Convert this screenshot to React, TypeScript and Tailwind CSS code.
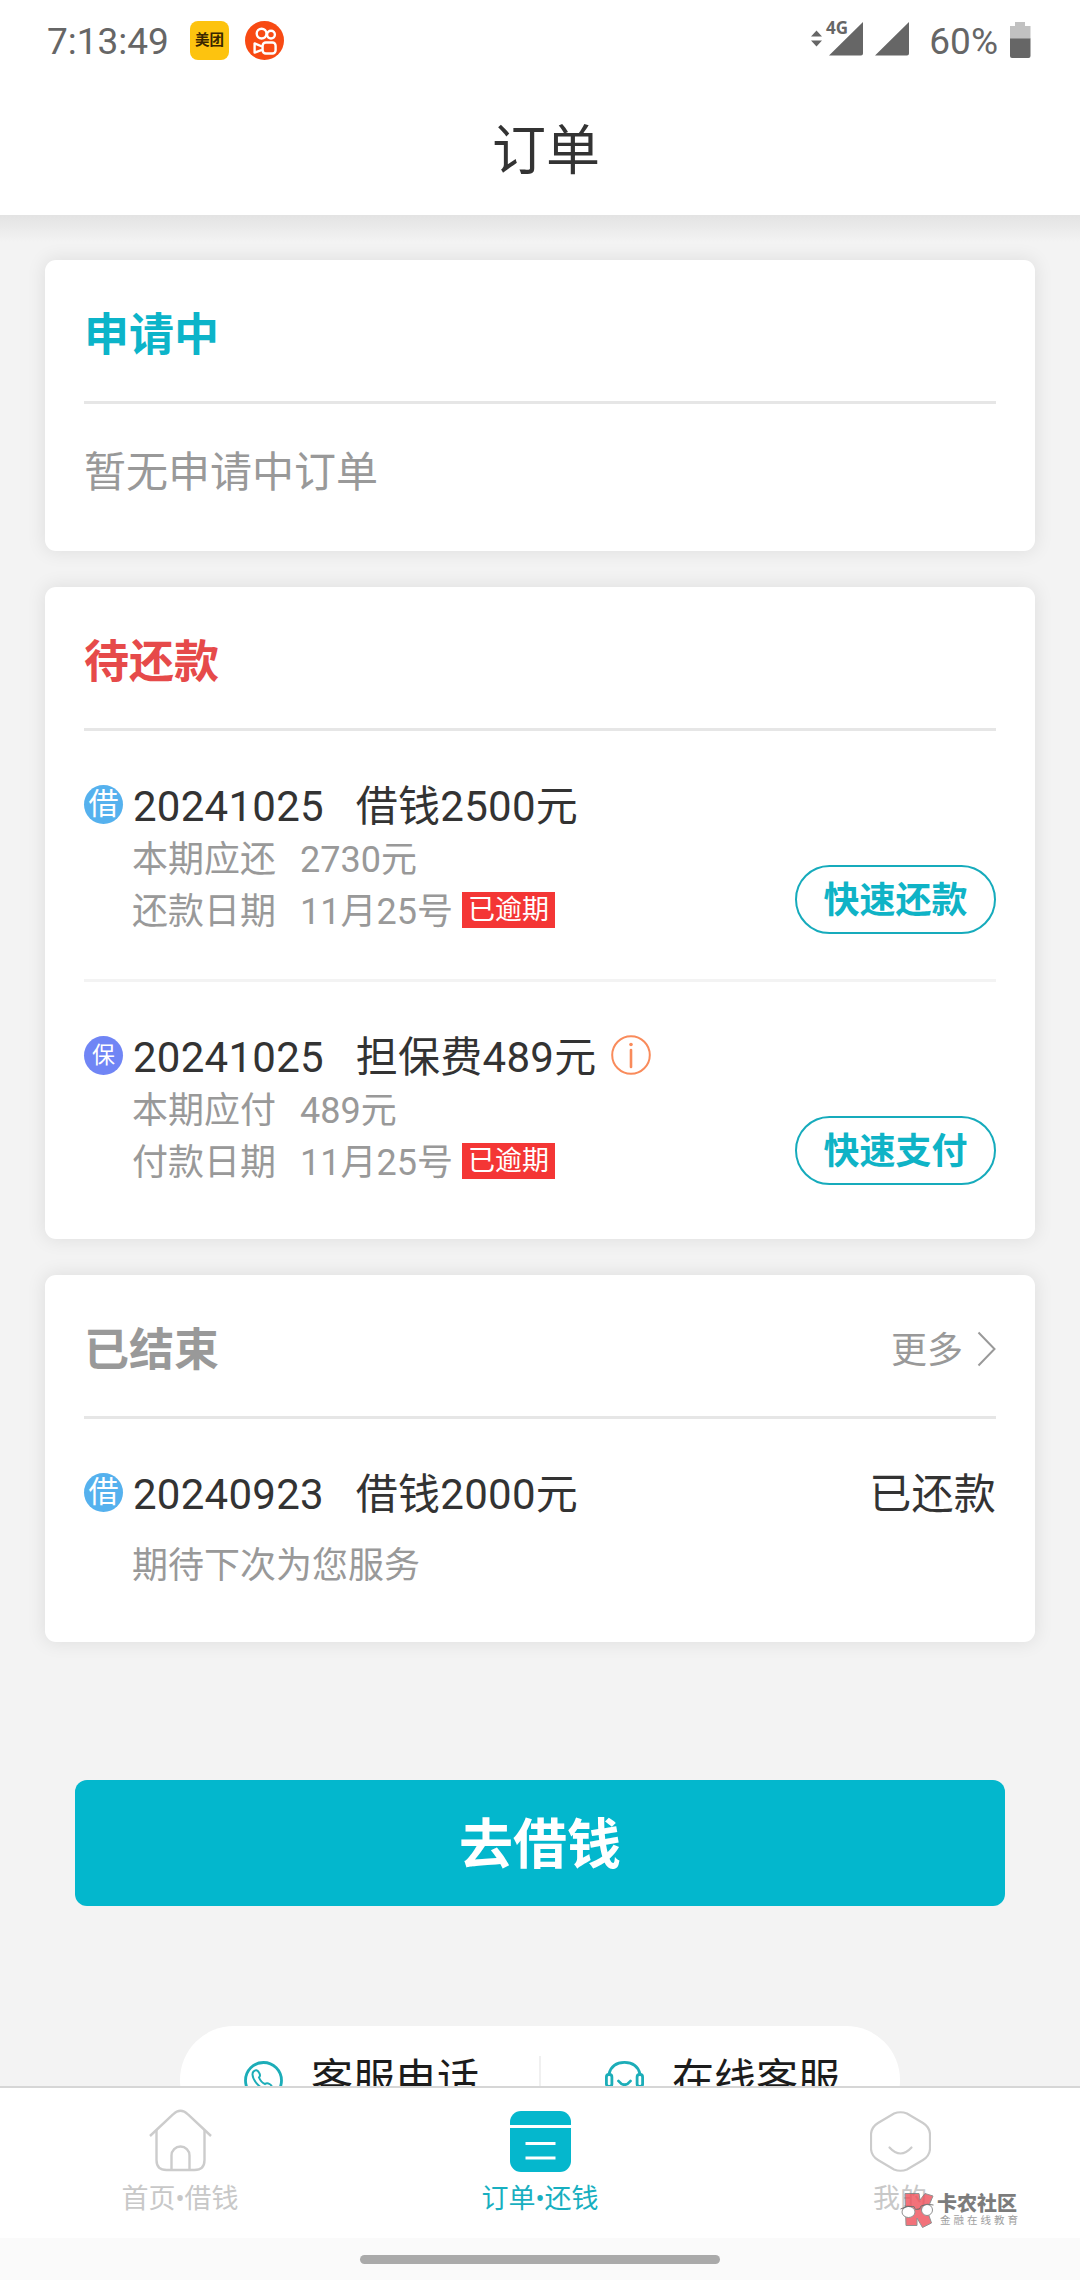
import React from "react";

const StatusBar = () => {
    return (
        <div className="flex h-[80px] items-center justify-between pl-[47px] pr-[49px] text-[37px] leading-[42px] text-[#666666]">
            <div className="flex items-center">
                <span className="w-[143px] pt-[3px]">7:13:49</span>
                {/* Meituan */}
                <div className="flex size-[39px] items-center justify-center rounded-[8px] bg-[#fdc30f] pt-[2px] text-[14.5px] leading-none font-bold text-[#3a2600]">
                    美团
                </div>
                {/* Kuaishou */}
                <svg className="ml-4" width="39" height="39" viewBox="0 0 39 39" fill="none" stroke="#fff" strokeWidth="2.4">
                    <circle cx="19.5" cy="19.5" r="19.5" fill="#f84a13" stroke="none" />
                    <circle cx="16.6" cy="12.6" r="4.9" />
                    <circle cx="26" cy="13.6" r="3.9" />
                    <rect x="17.600" y="21.500" width="13" height="11" rx="3.2" />
                    <path d="M17 25.500 9.600 22.400v9.200l7.400-2.800" strokeLinejoin="round" />
                </svg>
            </div>
            <div className="flex items-center">
                <svg width="100" height="50" viewBox="0 -6 100 50" fill="#666666">
                    <path d="M0 15.5 5.500 9.5 11 15.5ZM0 19.500h11L5.500 25.500Z" />
                    <text x="15" y="13" fontSize="17" fontWeight="700" fontFamily="Open Sans, sans-serif">
                        4G
                    </text>
                    <path d="M18 34.5 52 1v31.500q0 2-2 2ZM64 34.500 98 1v31.500q0 2-2 2Z" />
                </svg>
                <span className="ml-[18px] pt-[3px]">60%</span>
                <svg className="ml-[12px]" width="21" height="36" viewBox="0 0 21 36">
                    <path d="M5 0h10v4h5.500v13H0V4h5Z" fill="#c1c1c1" />
                    <path d="M0 16.500h20.500V34q0 2-2 2H2q-2 0-2-2Z" fill="#666666" />
                </svg>
            </div>
        </div>
    );
};

const Card = ({ children, className }: { children: React.ReactNode; className: string }) => (
    <section className={`rounded-[11px] bg-white px-[39px] shadow-[0_0_18px_2px_rgba(0,0,0,0.08)] ${className}`}>
        {children}
    </section>
);

const CardHeader = ({ title, color, more }: { title: string; color: string; more?: boolean }) => (
    <div className="flex h-[144px] items-center justify-between border-b-3 border-[#e6e6e6] pt-[11px]">
        <h2 className={`text-[45px] leading-[60px] font-bold ${color}`}>{title}</h2>
        {more && (
            <div className="flex items-center text-[36px] leading-[52px] text-[#999999]">
                更多
                <svg className="mb-[5px] ml-[14px]" width="19" height="36" viewBox="0 0 19 36" fill="none" stroke="#999999" strokeWidth="2">
                    <path d="M1.500 1.500 17.500 18 1.500 34.500" />
                </svg>
            </div>
        )}
    </div>
);

const Tag = ({ kind }: { kind: "loan" | "fee" }) =>
    kind === "loan" ? (
        <span className="flex size-[39px] items-center justify-center rounded-full bg-[#55b1ee] text-[30px] leading-none text-white">
            借
        </span>
    ) : (
        <span className="flex size-[39px] items-center justify-center rounded-full bg-[#7085f5] text-[23px] leading-none text-white">
            保
        </span>
    );

const InfoIcon = () => (
    <svg className="ml-[15px]" width="40" height="40" viewBox="0 0 40 40" fill="none" stroke="#f98b5b" strokeWidth="2">
        <circle cx="20" cy="20" r="18.800" />
        <path d="M20 15v17" strokeWidth="2.600" strokeLinecap="round" />
        <circle cx="20" cy="9.500" r="1.800" fill="#f98b5b" stroke="none" />
    </svg>
);

type Bill = {
    kind: "loan" | "fee";
    no: string;
    name: string;
    dueLabel: string;
    due: string;
    dateLabel: string;
    date: string;
    action: string;
};

const bills: Bill[] = [
    {
        kind: "loan",
        no: "20241025",
        name: "借钱2500元",
        dueLabel: "本期应还",
        due: "2730元",
        dateLabel: "还款日期",
        date: "11月25号",
        action: "快速还款",
    },
    {
        kind: "fee",
        no: "20241025",
        name: "担保费489元",
        dueLabel: "本期应付",
        due: "489元",
        dateLabel: "付款日期",
        date: "11月25号",
        action: "快速支付",
    },
];

const BillRow = ({ bill }: { bill: Bill }) => (
    <div className="flex h-[251px] items-start justify-between border-b-3 border-[#f3f3f3] pt-[43px] last:border-b-0">
        <div>
            <div className="flex h-[60px] items-center text-[42px] tracking-[0.25px] text-[#333333]">
                <Tag kind={bill.kind} />
                <span className="ml-[10px] pt-1">{bill.no}</span>
                <span className="ml-[32px] pt-1">{bill.name}</span>
                {bill.kind === "fee" && <InfoIcon />}
            </div>
            <div className="pl-[48px] text-[36px] leading-[52px] text-[#999999]">
                <div className="flex">
                    <span>{bill.dueLabel}</span>
                    <span className="ml-[24px]">{bill.due}</span>
                </div>
                <div className="flex items-center">
                    <span>{bill.dateLabel}</span>
                    <span className="ml-[24px]">{bill.date}</span>
                    <span className="mb-[4px] ml-[9px] flex h-[36px] w-[93px] items-center justify-center bg-[#f43635] text-[27px] text-white">
                        已逾期
                    </span>
                </div>
            </div>
        </div>
        <button className="mt-[91px] h-[69px] w-[201px] rounded-full border-2 border-[#16abbc] pt-[3px] text-[36px] leading-[52px] font-bold text-[#0fb3c6]">
            {bill.action}
        </button>
    </div>
);

const Service = ({ icon, label }: { icon: React.ReactNode; label: string }) => (
    <div className="flex flex-1 items-center pl-[64px]">
        {icon}
        <span className="ml-[28px] text-[42px] leading-[60px] text-[#1c1c1c]">{label}</span>
    </div>
);

const PhoneIcon = () => (
    <svg width="39" height="39" viewBox="0 0 39 39" fill="none" stroke="#1cadb8" strokeWidth="2.800">
        <circle cx="19.500" cy="19.500" r="18" />
        <path d="M9.500 10.500q3-3 5.500 1 2 3 0 5 2 5 6 6.500 2-1.500 4.500 0 4 2.500 1.500 5.500-4 3-10-2-8-6.500-8.500-13 0-2 1-3Z" strokeWidth="2" />
    </svg>
);

const HeadsetIcon = () => (
    <svg width="39" height="39" viewBox="0 0 39 39" fill="none" stroke="#1cadb8" strokeWidth="2.800">
        <path d="M4 13C6 5 12 1.400 19.500 1.400S33 5 35 13" />
        <rect x="1.400" y="13.500" width="5.500" height="12" rx="2.500" />
        <rect x="32.100" y="13.500" width="5.500" height="12" rx="2.500" />
        <path d="M13.500 20q6 7.500 12 0" strokeLinecap="round" />
        <path d="M35 26q-1 9-12 11" />
    </svg>
);

const HomeIcon = () => (
    <svg className="-mt-[2px]" width="63" height="63" viewBox="0 0 63 63" fill="none" stroke="#cccccc" strokeWidth="2.400">
        <path d="M1 27 24 5.500Q31.500-2 39 5.500L62 27" />
        <path d="M7.500 21v30q0 10 10 10h28q10 0 10-10V21" />
        <path d="M22.500 61V46.500a9 9 0 0 1 18 0V61" />
    </svg>
);

const OrderIcon = () => (
    <svg width="61" height="61" viewBox="0 0 61 61">
        <rect width="61" height="61" rx="11" fill="#05b7cd" />
        <path d="M0 15.500h61M15.500 32.500h30M15.500 47h30" stroke="#fff" strokeWidth="2.800" />
    </svg>
);

const MineIcon = () => (
    <svg width="61" height="61" viewBox="0 0 61 61" fill="none" stroke="#cccccc" strokeWidth="2.200">
        <path d="M24 2.500q6.500-2.500 13 0L53 12q6.500 4 7 11v15q-.5 7-7 11L37 58.500q-6.500 2.500-13 0L8 49q-6.500-4-7-11V23q.5-7 7-11Z" />
        <path d="M19.500 36.500q11 12 22 0" strokeLinecap="round" />
    </svg>
);

const tabs = [
    { label: "首页•借钱", icon: <HomeIcon />, color: "text-[#c8c8c8]" },
    { label: "订单•还钱", icon: <OrderIcon />, color: "text-[#18afc0]" },
    { label: "我的", icon: <MineIcon />, color: "text-[#c8c8c8]" },
];

const Watermark = () => (
    <div className="absolute top-[102px] left-[900px] flex items-start opacity-80">
        <svg width="35" height="40" viewBox="0 0 35 40">
            <path d="M5 3.500h14l1 6.500 5-6.500 8 2.500-6 14 4.500 13-9 4.500L17 28v7.500H6Z" fill="#f0505a" stroke="#777777" />
            <ellipse cx="8.500" cy="22" rx="6.500" ry="5.500" fill="#fff" stroke="#777777" />
            <ellipse cx="27" cy="20" rx="5.500" ry="5.500" fill="#fff" stroke="#777777" />
            <path d="M.500 19q7-4 13.500-2.500l1.500 3 4-.500 1.500-3q6-3 12.500-1" fill="none" stroke="#555555" />
        </svg>
        <div className="ml-[2px] pt-[4px] text-[#5c5c5c]">
            <div className="text-[20px] leading-[20px] font-black">卡农社区</div>
            <div className="pl-[3px] text-[10.500px] leading-[14px] tracking-[3px] text-[#888888]">金融在线教育</div>
        </div>
    </div>
);

const App = () => {
    return (
        <div className="flex h-[2280px] w-[1080px] flex-col overflow-hidden bg-[#f3f3f3] font-['Roboto','Noto_Sans_CJK_SC',sans-serif]">
            <header className="h-[215px] shrink-0 bg-white">
                <StatusBar />
                <h1 className="pt-[32px] pl-[12px] text-center text-[54px] leading-[80px] text-[#333333]">订单</h1>
            </header>

            <main className="flex-1 overflow-hidden">
                <div className="h-[27px] bg-linear-to-b from-[#e3e3e3] to-[#f3f3f3]" />
                <div className="flex flex-col gap-[36px] px-[45px] pt-[18px]">
                    <Card className="h-[291px]">
                        <CardHeader title="申请中" color="text-[#0cb4c9]" />
                        <p className="pt-[37px] text-[42px] leading-[64px] text-[#999999]">暂无申请中订单</p>
                    </Card>

                    <Card className="h-[652px]">
                        <CardHeader title="待还款" color="text-[#e64a4a]" />
                        {bills.map((bill) => (
                            <BillRow key={bill.kind} bill={bill} />
                        ))}
                    </Card>

                    <Card className="h-[367px]">
                        <CardHeader title="已结束" color="text-[#999999]" more />
                        <div className="mt-[43px] flex h-[60px] items-center text-[42px] tracking-[0.25px] text-[#333333]">
                            <Tag kind="loan" />
                            <span className="ml-[10px] pt-1">20240923</span>
                            <span className="ml-[32px] pt-1">借钱2000元</span>
                            <span className="ml-auto pt-1">已还款</span>
                        </div>
                        <p className="pt-[18px] pl-[48px] text-[36px] leading-[52px] text-[#999999]">期待下次为您服务</p>
                    </Card>
                </div>

                <button className="mx-[75px] mt-[138px] h-[126px] w-[930px] rounded-[12px] bg-[#03b7cd] pt-[4px] text-[54px] font-bold text-white">
                    去借钱
                </button>

                {/* Customer service */}
                <div className="mx-[180px] mt-[120px] flex h-[108px] items-center rounded-full bg-white">
                    <Service icon={<PhoneIcon />} label="客服电话" />
                    <div className="h-[48px] w-[2px] bg-[#f0f0f0]" />
                    <Service icon={<HeadsetIcon />} label="在线客服" />
                </div>
            </main>

            {/* Bottom tabs */}
            <nav className="relative flex h-[152px] shrink-0 border-t-2 border-[#d6d6d6] bg-white">
                {tabs.map((tab) => (
                    <div key={tab.label} className={`flex flex-1 flex-col items-center pt-[23px] ${tab.color}`}>
                        {tab.icon}
                        <span className="mt-[7px] text-[27px] leading-[40px]">{tab.label}</span>
                    </div>
                ))}
                <Watermark />
            </nav>
            <div className="flex h-[42px] shrink-0 justify-center bg-[#fafafa] pt-[17px]">
                <div className="h-[9px] w-[360px] rounded-full bg-[#aaaaaa]" />
            </div>
        </div>
    );
};

export default App;
